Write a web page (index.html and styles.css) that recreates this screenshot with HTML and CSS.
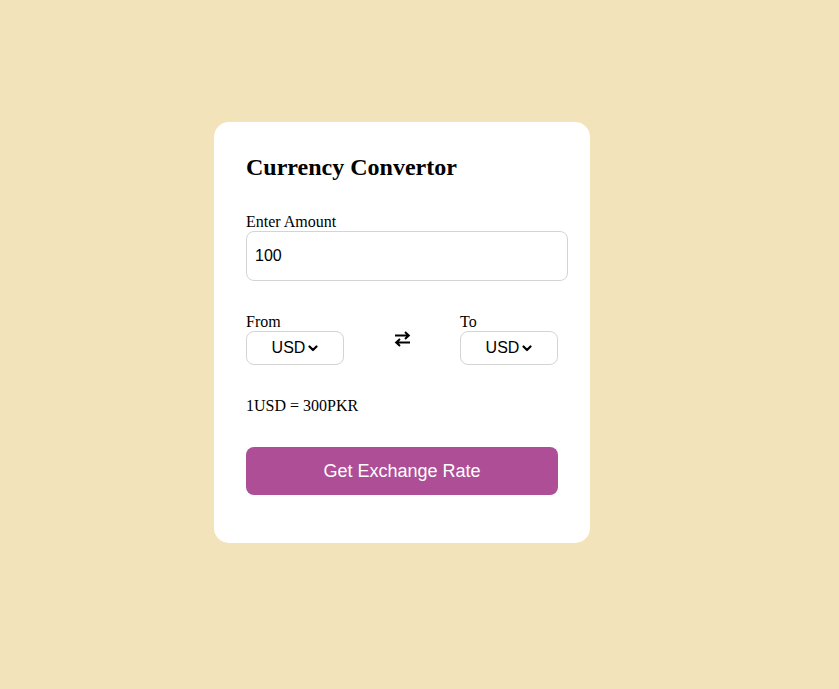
FILE: index.html
```html
<!DOCTYPE html>
<html lang="en">
<head>
<meta charset="utf-8">
<title>Currency Convertor</title>
<link rel="stylesheet" href="styles.css">
</head>
<body>
<main class="page">
  <section class="card">
    <h2 class="title">Currency Convertor</h2>
    <div class="field">
      <label class="label" for="amount">Enter Amount</label>
      <input class="amount" id="amount" type="text" value="100">
    </div>
    <div class="row">
      <div class="field">
        <span class="label">From</span>
        <div class="select"><span>USD</span><svg class="chev" width="10" height="7" viewBox="0 0 10 7"><path d="M1.5 1.5 L5 5 L8.5 1.5" fill="none" stroke="#000" stroke-width="2.2" stroke-linecap="round" stroke-linejoin="round"/></svg></div>
      </div>
      <svg class="swap" width="17" height="16" viewBox="0 0 17 16">
        <path d="M1 4.5 H14.5 M11 1 L14.8 4.5 L11 8" fill="none" stroke="#000" stroke-width="2"/>
        <path d="M16 11.5 H2.5 M6 8 L2.2 11.5 L6 15" fill="none" stroke="#000" stroke-width="2"/>
      </svg>
      <div class="field">
        <span class="label">To</span>
        <div class="select"><span>USD</span><svg class="chev" width="10" height="7" viewBox="0 0 10 7"><path d="M1.5 1.5 L5 5 L8.5 1.5" fill="none" stroke="#000" stroke-width="2.2" stroke-linecap="round" stroke-linejoin="round"/></svg></div>
      </div>
    </div>
    <p class="result">1USD = 300PKR</p>
    <button class="btn" type="button">Get Exchange Rate</button>
  </section>
</main>
</body>
</html>
```

FILE: styles.css
```css
html, body {
  margin: 0;
  padding: 0;
}
body {
  background: #f3e3ba;
  font-family: "Liberation Serif", "Times New Roman", serif;
  color: #000;
  min-height: 689px;
}
.page {
  display: flex;
  align-items: flex-start;
  padding: 122px 0 0 214px;
}
.card {
  width: 376px;
  box-sizing: border-box;
  background: #fff;
  border-radius: 15px;
  padding: 32px 32px 48px;
  display: flex;
  flex-direction: column;
  gap: 32px;
}
.title {
  margin: 0;
  font-size: 24px;
  line-height: 27px;
  font-weight: bold;
}
.field {
  display: flex;
  flex-direction: column;
}
.label {
  font-size: 16px;
  line-height: 18px;
}
.amount {
  width: 322px;
  height: 50px;
  box-sizing: border-box;
  border: 1px solid #d4d4d4;
  border-radius: 8px;
  padding: 0 8px;
  font-family: "Liberation Sans", Arial, sans-serif;
  font-size: 16px;
  color: #000;
  outline: none;
}
.row {
  display: flex;
  justify-content: space-between;
  align-items: center;
}
.select {
  width: 98px;
  height: 34px;
  box-sizing: border-box;
  border: 1px solid #d4d4d4;
  border-radius: 8px;
  display: flex;
  align-items: center;
  justify-content: center;
  gap: 3px;
  font-family: "Liberation Sans", Arial, sans-serif;
  font-size: 16px;
}
.chev {
  display: block;
  margin-top: 1px;
}
.swap {
  display: block;
  margin-top: 0;
}
.result {
  margin: 0;
  font-size: 16px;
  line-height: 18px;
}
.btn {
  width: 312px;
  height: 48px;
  border: none;
  border-radius: 8px;
  background: #ad4e96;
  color: #fff;
  font-family: "Liberation Sans", Arial, sans-serif;
  font-size: 18px;
  cursor: pointer;
}
```
